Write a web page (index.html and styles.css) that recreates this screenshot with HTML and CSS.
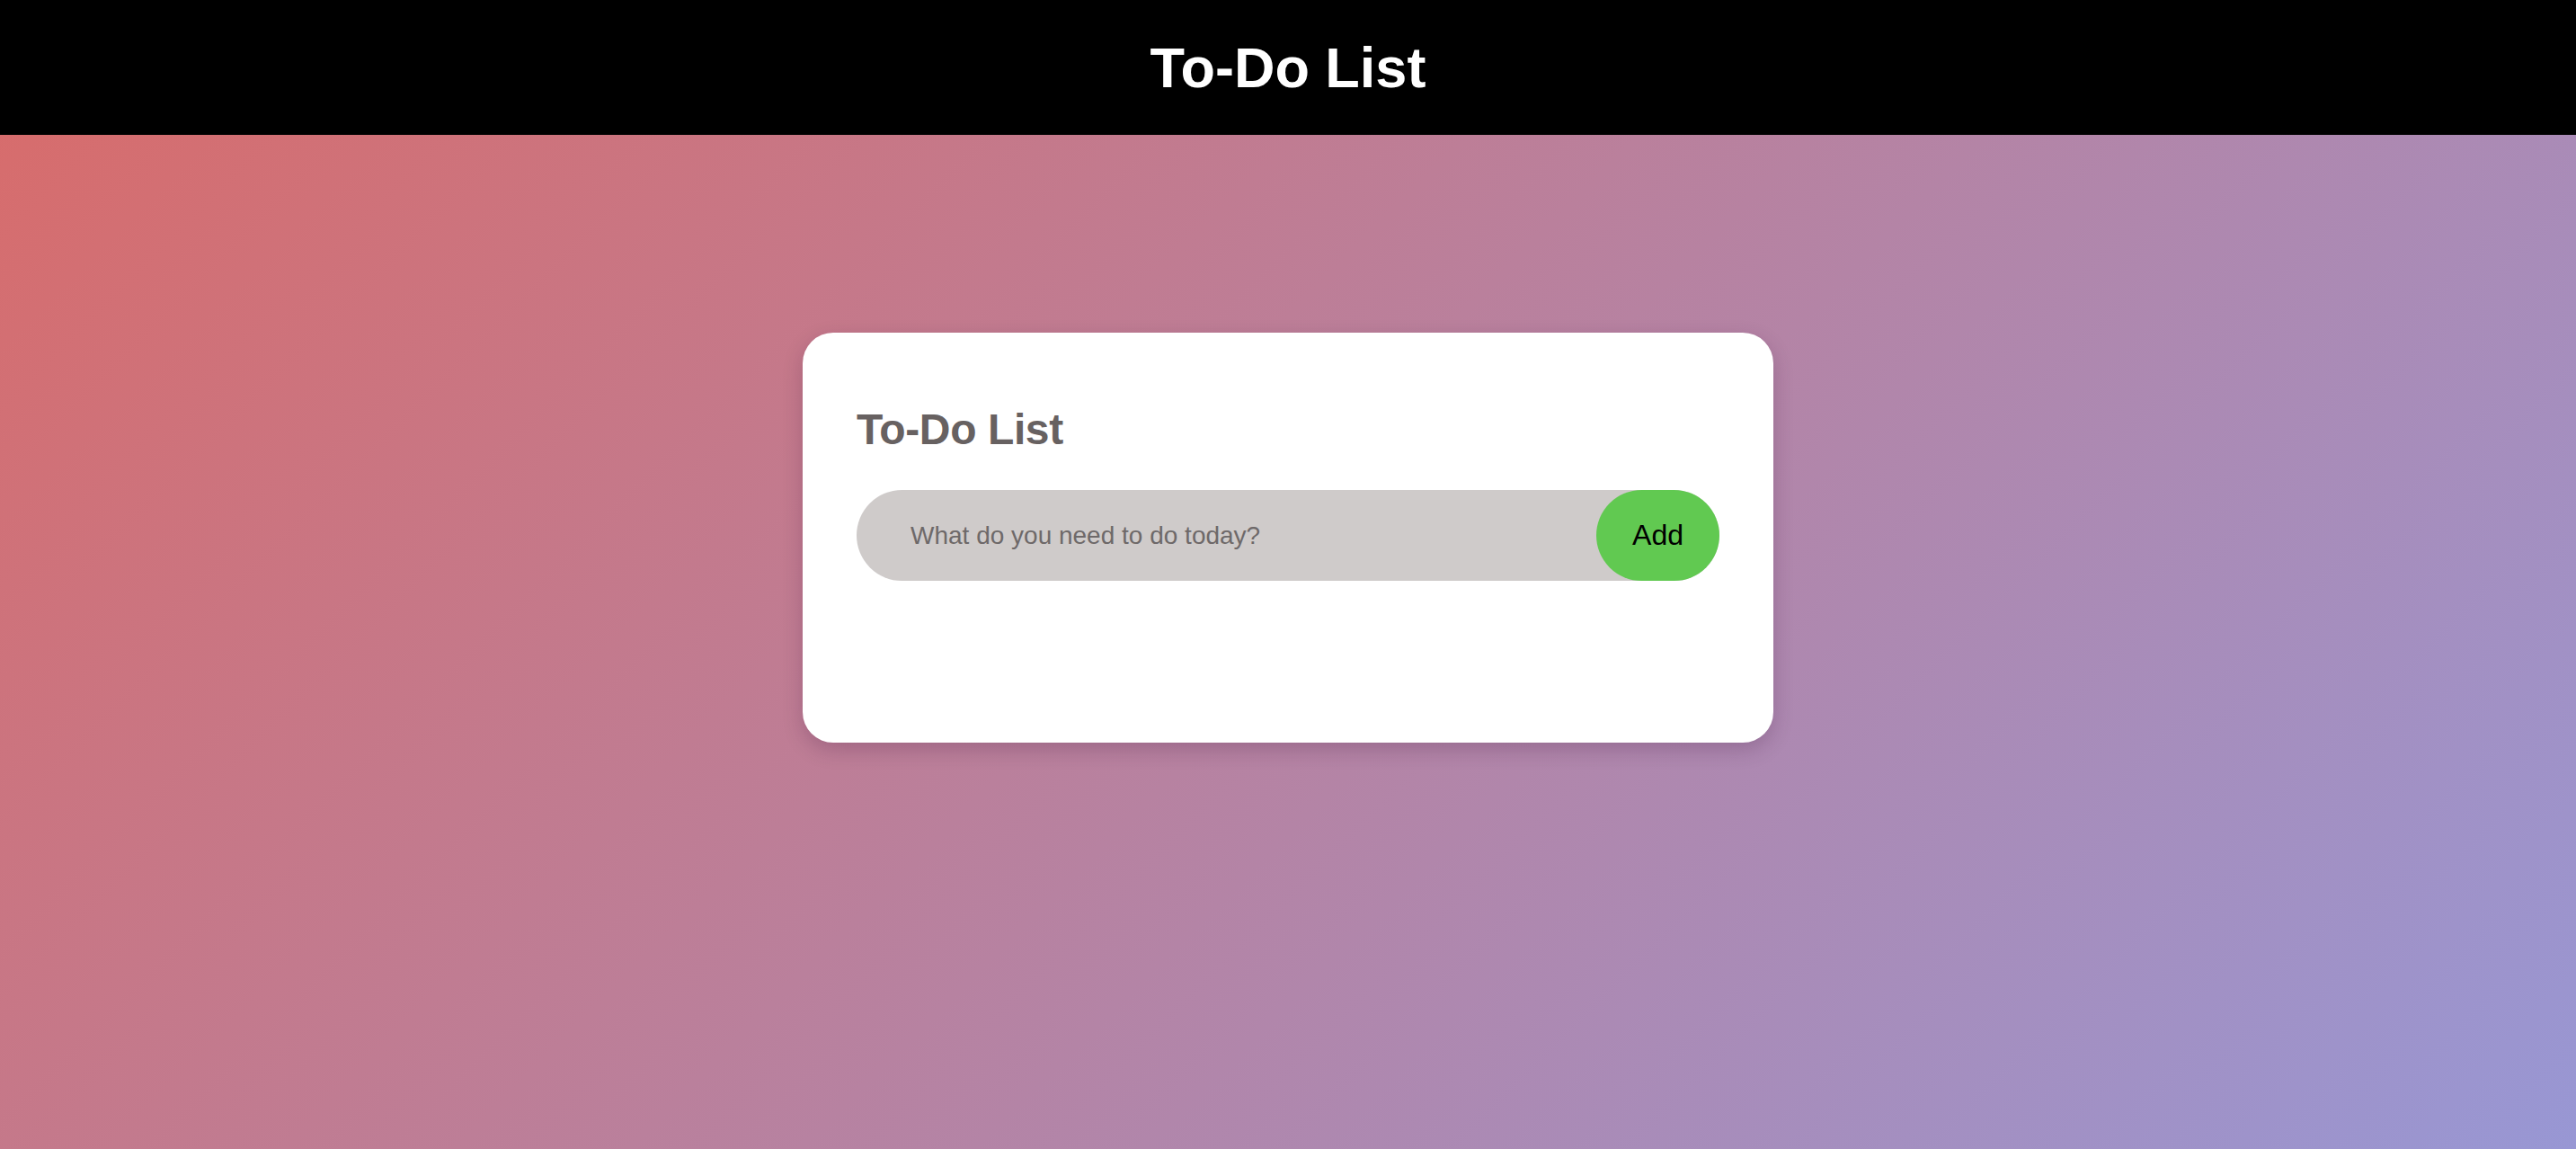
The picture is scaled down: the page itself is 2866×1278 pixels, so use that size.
FILE: index.html
```html
<!DOCTYPE html>
<html lang="en">
<head>
<meta charset="utf-8">
<title>To-Do List</title>
<link rel="stylesheet" href="styles.css">
</head>
<body>
<header class="topbar">
  <h1 class="topbar-title">To-Do List</h1>
</header>
<main class="main">
  <section class="card">
    <h2 class="card-title">To-Do List</h2>
    <div class="add-row">
      <input class="add-input" type="text" placeholder="What do you need to do today?">
      <button class="add-btn" type="button">Add</button>
    </div>
    <ul class="todo-list"></ul>
  </section>
</main>
</body>
</html>
```
FILE: styles.css
```css
* { box-sizing: border-box; }
html, body { margin: 0; padding: 0; }
body {
  min-height: 100vh;
  font-family: "Liberation Sans", Arial, Helvetica, sans-serif;
  background: linear-gradient(135deg, #d96b69 0%, #9897d4 100%);
}
.topbar {
  height: 150px;
  background: #000;
  display: flex;
  align-items: center;
  justify-content: center;
}
.topbar-title {
  margin: 0;
  color: #fff;
  font-size: 63px;
  font-weight: 700;
  line-height: 1;
}
.main {
  padding-top: 220px;
}
.card {
  width: 1080px;
  margin: 0 auto;
  background: #fff;
  border-radius: 34px;
  padding: 84px 60px 180px 60px;
  box-shadow: 0 8px 22px rgba(60, 20, 60, 0.22);
}
.card-title {
  margin: 0 0 43px 0;
  color: #676161;
  font-size: 48px;
  font-weight: 700;
  line-height: 1;
  letter-spacing: -0.4px;
}
.add-row {
  display: flex;
  height: 101px;
  background: #cfcbca;
  border-radius: 51px;
}
.add-input {
  flex: 1;
  min-width: 0;
  border: 0;
  outline: none;
  background: transparent;
  padding: 0 0 0 60px;
  font-family: "Liberation Sans", Arial, sans-serif;
  font-size: 28px;
  color: #333;
}
.add-input::placeholder {
  color: #6e6969;
  opacity: 1;
}
.add-btn {
  width: 137px;
  height: 101px;
  border: 0;
  border-radius: 51px;
  background: #61c951;
  color: #000;
  font-family: "Liberation Sans", Arial, sans-serif;
  font-size: 32px;
  padding: 0;
  cursor: pointer;
}
.todo-list {
  margin: 0;
  padding: 0;
  list-style: none;
}
```
